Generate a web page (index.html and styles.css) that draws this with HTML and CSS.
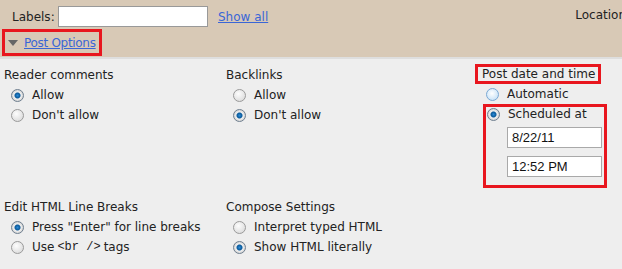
FILE: index.html
```html
<!DOCTYPE html>
<html lang="en">
<head>
    <meta charset="UTF-8">
    <title>Post Options</title>
<link rel="stylesheet" href="styles.css">
</head>
<body>
<div class="header">
    <div class="labels-row">
        <span class="field-label">Labels:</span>
        <input type="text" class="labels-input">
        <a href="#" class="link show-all">Show all</a>
        <span class="location">Location</span>
    </div>
    <div class="toggle-box">
        <span class="arrow"></span>
        <a href="#" class="link">Post Options</a>
    </div>
</div>
<div class="options">
    <div class="group">
        <div class="group-title">Reader comments</div>
        <label class="choice"><input type="radio" name="comments" checked> Allow</label>
        <label class="choice"><input type="radio" name="comments"> Don't allow</label>
    </div>
    <div class="group">
        <div class="group-title">Backlinks</div>
        <label class="choice"><input type="radio" name="backlinks"> Allow</label>
        <label class="choice"><input type="radio" name="backlinks" checked> Don't allow</label>
    </div>
    <div class="group date-group">
        <div class="group-title marked">Post date and time</div>
        <label class="choice"><input type="radio" name="date" class="auto"> Automatic</label>
        <div class="marked schedule">
            <label class="choice"><input type="radio" name="date" checked> Scheduled at</label>
            <input type="text" class="date-input" value="8/22/11">
            <input type="text" class="date-input" value="12:52 PM">
        </div>
    </div>
    <div class="group">
        <div class="group-title">Edit HTML Line Breaks</div>
        <label class="choice"><input type="radio" name="breaks" checked> Press "Enter" for line breaks</label>
        <label class="choice"><input type="radio" name="breaks"> Use <code>&lt;br /&gt;</code> tags</label>
    </div>
    <div class="group">
        <div class="group-title">Compose Settings</div>
        <label class="choice"><input type="radio" name="compose"> Interpret typed HTML</label>
        <label class="choice"><input type="radio" name="compose" checked> Show HTML literally</label>
    </div>
</div>
</body>
</html>
```

FILE: styles.css
```css
body {
    margin: 0;
    background: #eeeeee;
    font-family: "DejaVu Sans", Verdana, sans-serif;
    font-size: 12px;
    color: #222;
    overflow: hidden;
}
.header {
    background: #d8c9b6;
    height: 57px;
    border-bottom: 2px solid #dedede;
    padding: 0 0 0 2px;
}
.labels-row {
    display: flex;
    align-items: center;
    height: 31px;
    padding-left: 10px;
    padding-top: 2px;
    box-sizing: border-box;
    white-space: nowrap;
}
.field-label {
    width: 46px;
}
.labels-input {
    width: 150px;
    height: 21px;
    margin: 0;
    padding: 0 2px;
    border: 1px solid #999;
    background: #fff;
    box-sizing: border-box;
}
.show-all {
    margin-left: 10px;
}
.location {
    margin-left: auto;
    margin-right: -4px;
    margin-bottom: 4px;
}
.link {
    color: #3a66d6;
    text-decoration: underline;
}
.toggle-box .link {
    letter-spacing: -0.3px;
}
.toggle-box {
    display: inline-flex;
    align-items: center;
    height: 21px;
    padding: 0 3px 0 3px;
    border: 3px solid #e8161e;
    margin-top: -2px;
}
.arrow {
    width: 0;
    height: 0;
    border-left: 5px solid transparent;
    border-right: 5px solid transparent;
    border-top: 6px solid #666;
    margin-right: 6px;
    margin-top: 1px;
}
.options {
    display: grid;
    grid-template-columns: 222px 249px 1fr;
    padding: 6px 0 0 4px;
    row-gap: 9px;
}
.group-title {
    height: 20px;
    line-height: 20px;
    color: #222;
}
.choice {
    display: flex;
    align-items: center;
    height: 20px;
    padding-left: 7px;
    color: #222;
    white-space: nowrap;
}
.choice input {
    appearance: none;
    width: 13px;
    height: 13px;
    margin: 0 8px 0 0;
    border-radius: 50%;
    border: 1px solid #9a9a9a;
    background: radial-gradient(circle at 40% 35%, #fdfdfd, #d4d4d4);
    box-sizing: border-box;
}
.choice input:checked {
    border-color: #6f7f8f;
    background: radial-gradient(circle, #2a8ad6 0, #0b5a9a 2.5px, #f0f0f0 3.5px, #cfcfcf 6px);
}
.choice input.auto {
    border-color: #7aa8d4;
    background: radial-gradient(circle at 45% 40%, #ffffff, #b9daf4);
}
.choice code {
    font-family: "Liberation Mono", monospace;
    font-size: 12px;
    margin: 0 3px;
}
.marked {
    border: 3px solid #e8161e;
}
.date-group .group-title {
    display: inline-block;
    height: 14px;
    line-height: 14px;
    padding: 0 3px 0 4px;
    margin-top: -1px;
}
.date-group > .choice {
    padding-left: 11px;
}
.schedule {
    margin-left: 8px;
    width: 118px;
    padding: 0 0 8px 0;
}
.schedule .choice {
    padding-left: 1px;
    height: 14px;
}
.date-input {
    display: block;
    width: 95px;
    height: 21px;
    margin: 6px 0 8px 21px;
    padding: 0 4px;
    border: 1px solid #a9a9a9;
    background: #fff;
    box-sizing: border-box;
    font-family: "Liberation Sans", Arial, sans-serif;
    font-size: 13px;
    color: #111;
}
.date-input + .date-input {
    margin: 0 0 0 21px;
}
```
